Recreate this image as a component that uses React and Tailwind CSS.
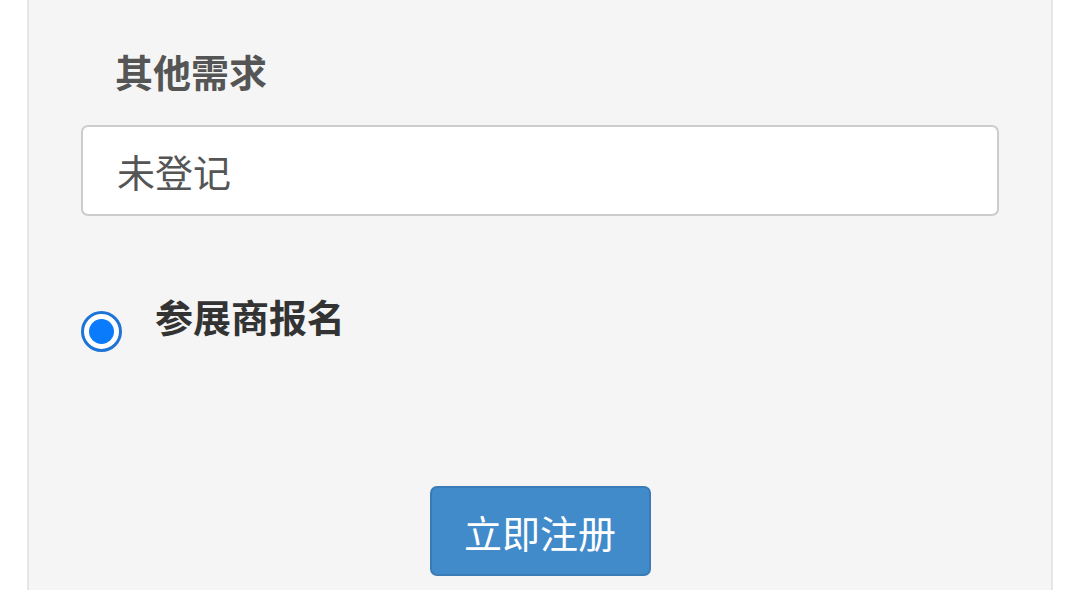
export default function App() {
  const font = { fontFamily: '"Noto Sans CJK SC", "Noto Sans", sans-serif' };
  return (
    <div className="w-full h-[590px] bg-white overflow-hidden" style={font}>
      <div className="ml-[27px] w-[1026px] h-[590px] bg-[#f5f5f5] border-x-2 border-[#e6e6e6] px-[52px]">
        <div className="pt-[49px] pl-[34px] text-[38px] leading-[44px] font-bold text-[#555555]">其他需求</div>
        <div className="mt-[32px] h-[91px] w-[918px] bg-white border-2 border-[#cccccc] rounded-[7px] flex items-center pl-[34px] text-[38px] text-[#555555]">
          未登记
        </div>
        <div className="mt-[78px] flex items-start">
          <div className="w-[41px] h-[41px] rounded-full border-[3px] border-[#1f74d6] bg-white flex items-center justify-center mt-[17px]">
            <div className="w-[25px] h-[25px] rounded-full bg-[#0a7bfb]" />
          </div>
          <div className="ml-[33px] text-[38px] leading-[44px] font-bold text-[#333333]">参展商报名</div>
        </div>
        <div className="mt-[134px] flex justify-center">
          <div className="w-[221px] h-[90px] bg-[#428bca] border-2 border-[#3a7cb8] rounded-[7px] flex items-center justify-center text-[38px] text-white">
            立即注册
          </div>
        </div>
      </div>
    </div>
  );
}
